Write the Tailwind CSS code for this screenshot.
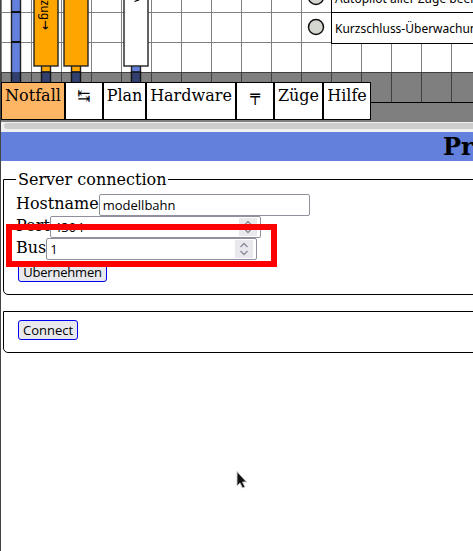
<!DOCTYPE html>
<html lang="de">
<head>
<meta charset="utf-8">
<title>Server connection</title>
<script src="https://cdn.jsdelivr.net/npm/@tailwindcss/browser@4"></script>
</head>
<body class="w-[473px] h-[551px] overflow-hidden bg-white text-black font-['DejaVu_Serif',serif] text-base">
<div class="relative w-[473px] h-[551px] overflow-hidden border-l border-[#444] flex flex-col">
  <!-- track plan -->
  <section class="relative h-[122px] shrink-0">
    <svg class="absolute -left-px top-0" width="474" height="122" viewBox="0 0 474 122">
      <path d="M1.5 0V102M31.5 0V102M61.5 0V102M91.5 0V102M121.5 0V102M151.5 0V102M181.5 0V102M211.5 0V102M241.5 0V102M271.5 0V102M301.5 0V102M331.5 0V102M361.5 0V102M391.5 0V102M421.5 0V102M451.5 0V102M0 12.5H474M0 42.5H474M0 72.5H474" stroke="#808080" fill="none"/>
      <rect x="11.5" y="-5" width="9" height="100" fill="#6280dc" stroke="#222" stroke-width="1.4"/>
      <path d="M11 12H21M11 42H21" stroke="#111" stroke-width="2"/>
      <g stroke="#222" stroke-width="1.4">
        <rect x="41.5" y="55" width="9" height="17" fill="#ffa500"/>
        <rect x="71.5" y="55" width="9" height="17" fill="#ffa500"/>
        <rect x="131.5" y="55" width="9" height="17" fill="#6280dc"/>
        <rect x="41.5" y="72" width="9" height="20" fill="#6280dc"/>
        <rect x="71.5" y="72" width="9" height="20" fill="#6280dc"/>
        <rect x="131.5" y="72" width="9" height="20" fill="#6280dc"/>
        <rect x="34" y="-5" width="24" height="71" fill="#ffa500"/>
        <rect x="64" y="-5" width="24" height="71" fill="#ffa500"/>
        <rect x="124" y="-5" width="24" height="71" fill="#fff"/>
      </g>
      <text transform="translate(40.5 0) rotate(90)" font-family="Noto Sans, DejaVu Sans" font-size="13" textLength="30" lengthAdjust="spacingAndGlyphs">zug→</text>
      <path d="M134.5 1.5L139 0" stroke="#000" stroke-width="1.3"/>
      <rect x="331.5" y="-10" width="160" height="22.5" fill="#fff" stroke="#000"/>
      <rect x="331.5" y="12.5" width="160" height="31" fill="#fff" stroke="#000"/>
      <circle cx="316" cy="-3" r="7.5" fill="#d3d7cf" stroke="#111" stroke-width="1.5"/>
      <circle cx="316" cy="27" r="7.5" fill="#d3d7cf" stroke="#111" stroke-width="1.5"/>
      <text x="335" y="3" font-family="Noto Sans" font-size="12">Autopilot aller Züge beenden</text>
      <text x="335" y="33" font-family="Noto Sans" font-size="12">Kurzschluss-Überwachung</text>
      <rect x="0" y="72" width="474" height="50" fill="#000" fill-opacity=".5"/>
      <path d="M371 102.5H474" stroke="#000"/>
    </svg>
    <nav class="absolute left-0 top-[82px] h-[38px] flex leading-[19px] whitespace-nowrap text-center">
      <div class="w-[64px] border border-black bg-[#ffb664] pt-[3px]">Notfall</div>
      <div class="w-[38px] border border-black bg-white pt-[3px]">↹</div>
      <div class="w-[43px] border border-black bg-white pt-[3px]">Plan</div>
      <div class="w-[90px] border border-black bg-white pt-[3px]">Hardware</div>
      <div class="w-[38px] border border-black bg-white pt-[3px]">╤</div>
      <div class="w-[49px] border border-black bg-white pt-[3px]">Züge</div>
      <div class="w-[48px] border border-black bg-white pt-[3px]">Hilfe</div>
    </nav>
  </section>
  <div class="h-[10px] shrink-0 bg-[#f0f0f0] pl-[3px] pt-px"><div class="h-[6px] bg-[#cdcdcd] rounded-l-full"></div></div>
  <h1 class="h-[29px] shrink-0 bg-[#6280dc] pl-[442px] text-2xl leading-[29px] font-bold whitespace-nowrap">Programm</h1>
  <fieldset class="ml-[2px] mt-[9px] h-[125px] w-[500px] shrink-0 border border-black rounded-bl-[5px] pl-3">
    <legend class="h-[19px] leading-[19px] px-[2px]">Server connection</legend>
    <div class="mt-[5px] h-[22px] flex"><label class="leading-[19px]">Hostname</label><div class="w-[211px] h-[22px] border border-[#8f8f9d] rounded-[2px] bg-white pl-[3px] font-['Open_Sans',sans-serif] text-[13px] leading-[20px]">modellbahn</div></div>
    <div class="h-[22px] flex"><label class="leading-[19px]">Port</label><div class="w-[211px] h-[22px] border border-[#8f8f9d] rounded-[2px] bg-white pl-[3px] pr-[3px] flex items-center justify-between font-['Open_Sans',sans-serif] text-[13px]"><span class="pt-[2px]">4304</span><svg class="bg-[#e9e9ed]" width="18" height="18" fill="none" stroke="#8f8f9d" stroke-width="1.5"><path d="M5.5 7L9 3.5L12.5 7M5.5 11L9 14.5L12.5 11"/></svg></div></div>
    <div class="h-[22px] flex"><label class="leading-[19px]">Bus</label><div class="w-[211px] h-[22px] border border-[#8f8f9d] rounded-[2px] bg-white pl-[3px] pr-[3px] flex items-center justify-between font-['Open_Sans',sans-serif] text-[13px]"><span class="pt-[2px]">1</span><svg class="bg-[#e9e9ed]" width="18" height="18" fill="none" stroke="#8f8f9d" stroke-width="1.5"><path d="M5.5 7L9 3.5L12.5 7M5.5 11L9 14.5L12.5 11"/></svg></div></div>
    <button class="block ml-[2px] mt-[2px] w-[89px] h-[20px] border border-[#0000f0] rounded-[3px] bg-[#e9e9ed] font-['Open_Sans',sans-serif] text-[13px] leading-[17px] tracking-[-0.2px]">Übernehmen</button>
  </fieldset>
  <fieldset class="ml-[2px] mt-[16px] h-[42px] w-[500px] shrink-0 border border-black rounded-bl-[5px] pl-[14px] pt-[8px]">
    <button class="block w-[60px] h-[20px] border border-[#0000f0] rounded-[3px] bg-[#e9e9ed] font-['Open_Sans',sans-serif] text-[13px] leading-[18px]">Connect</button>
  </fieldset>
  <div class="absolute left-[5px] top-[224px] w-[271px] h-[43px] border-[6px] border-[#f00]"></div>
  <svg class="absolute left-[234px] top-[469px]" width="13" height="22" viewBox="0 0 13 22"><path d="M2 2.5V17L5 14L7.5 19L10 18L7.5 13H11.5Z" fill="#111" stroke="#ccc" stroke-width=".9"/></svg>
</div>
</body>
</html>
